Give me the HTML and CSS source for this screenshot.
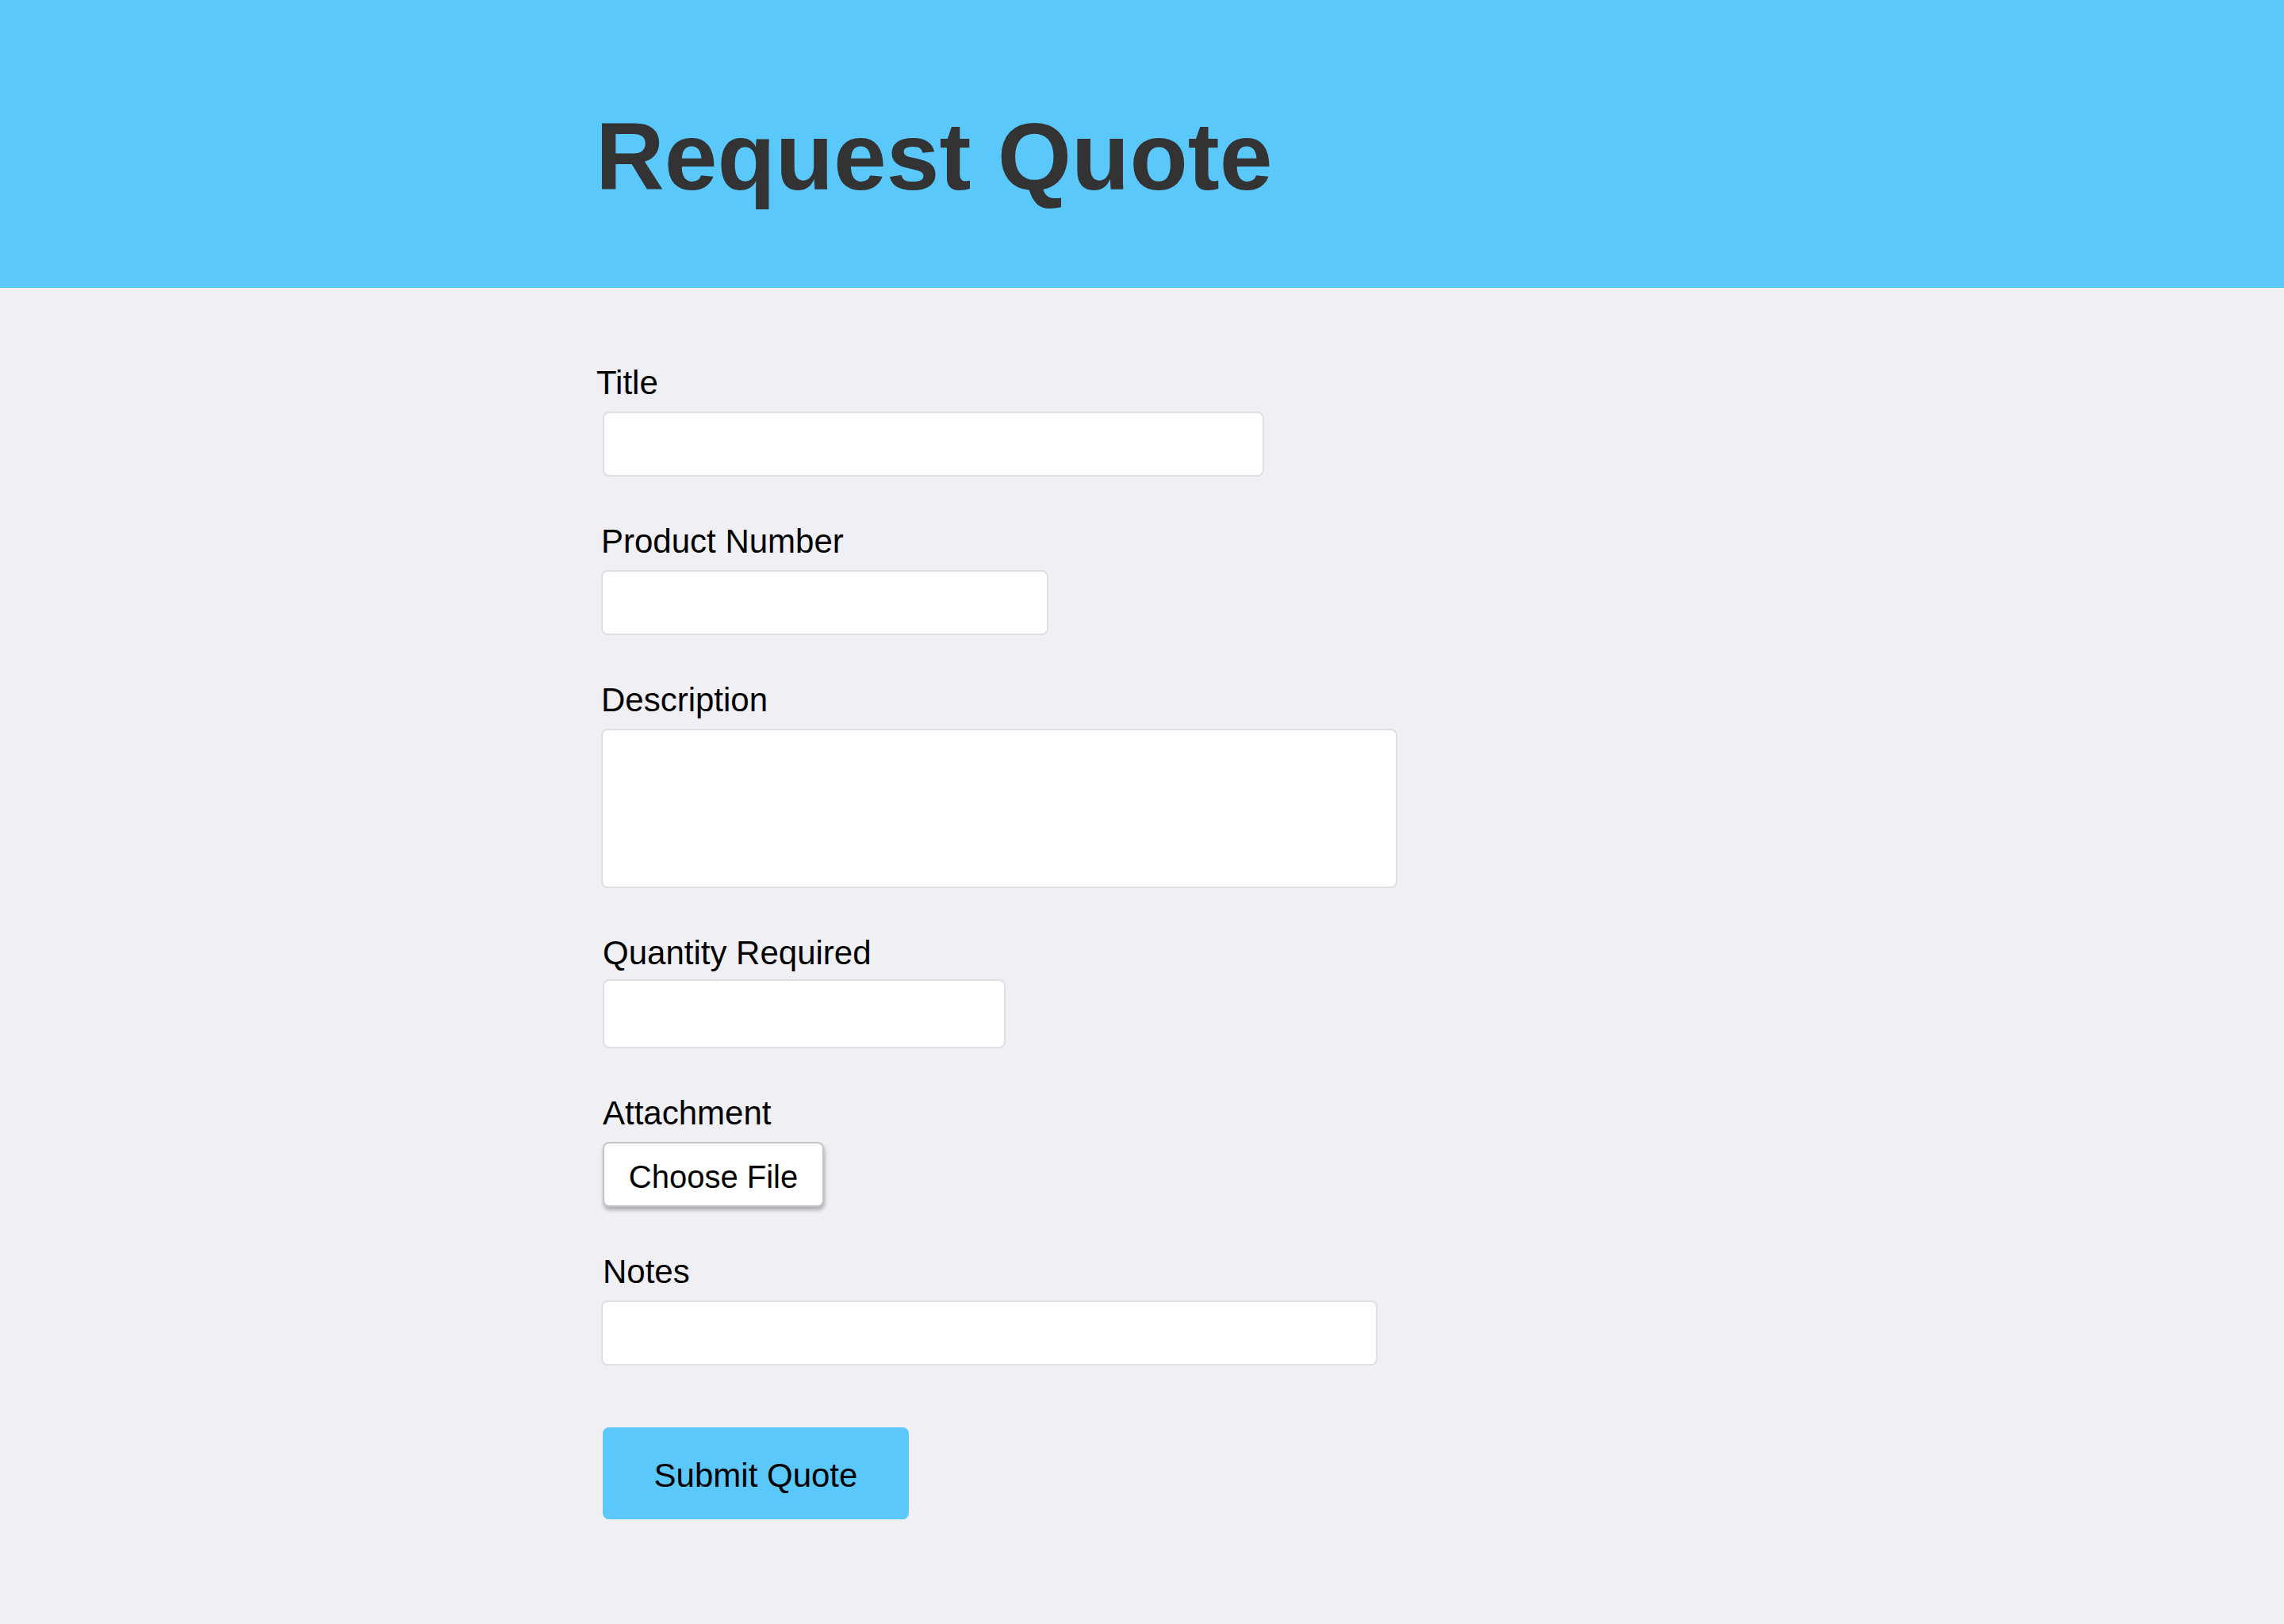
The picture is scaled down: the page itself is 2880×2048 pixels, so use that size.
FILE: index.html
```html
<!DOCTYPE html>
<html lang="en">
<head>
<meta charset="utf-8">
<title>Request Quote</title>
<link rel="stylesheet" href="styles.css">
</head>
<body>
  <header class="masthead">
    <div class="container">
      <h1 class="page-title">Request Quote</h1>
    </div>
  </header>
  <main class="container">
    <form class="quote-form" onsubmit="return false;">
      <div class="field">
        <label class="field-label flush" for="title">Title</label>
        <input class="text-input w-title shift" id="title" type="text">
      </div>
      <div class="field">
        <label class="field-label" for="product">Product Number</label>
        <input class="text-input w-product" id="product" type="text">
      </div>
      <div class="field">
        <label class="field-label" for="description">Description</label>
        <textarea class="text-input w-description" id="description"></textarea>
      </div>
      <div class="field">
        <label class="field-label shift" for="quantity">Quantity Required</label>
        <input class="text-input w-quantity shift qty" id="quantity" type="text">
      </div>
      <div class="field">
        <label class="field-label shift" for="attachment">Attachment</label>
        <button class="file-button shift" id="attachment" type="button">Choose File</button>
      </div>
      <div class="field last">
        <label class="field-label shift" for="notes">Notes</label>
        <input class="text-input w-notes" id="notes" type="text">
      </div>
      <button class="submit-button" type="submit">Submit Quote</button>
    </form>
  </main>
</body>
</html>
```

FILE: styles.css
```css
* {
  box-sizing: border-box;
}

html, body {
  margin: 0;
  padding: 0;
}

body {
  background: #efeff4;
  font-family: "Liberation Sans", Arial, sans-serif;
  color: #000;
  min-height: 2048px;
}

.container {
  width: 1378px;
  margin: 0 auto;
}

.masthead {
  background: #5ac8fa;
  height: 363px;
  padding-top: 128px;
}

.page-title {
  margin: 0;
  font-size: 120px;
  line-height: 138px;
  font-weight: 700;
  color: #333333;
}

.quote-form {
  padding-top: 96px;
  padding-left: 7px;
  display: flex;
  flex-direction: column;
  align-items: flex-start;
}

.field {
  display: flex;
  flex-direction: column;
  align-items: flex-start;
  margin-bottom: 58px;
}

.field.last {
  margin-bottom: 78px;
}

.field-label {
  display: block;
  font-size: 42px;
  line-height: 48px;
  margin-bottom: 12px;
  color: #000;
}

.field-label.flush {
  margin-left: -6px;
}

.shift {
  margin-left: 2px;
}

.text-input {
  display: block;
  height: 82px;
  background: #ffffff;
  border: 2px solid #dedee3;
  border-radius: 8px;
  font-family: inherit;
  font-size: 40px;
  padding: 0 16px;
  outline: none;
  margin: 0;
  resize: none;
}

.text-input.shift {
  margin-left: 2px;
}

.text-input.qty {
  height: 87px;
  margin-top: -3px;
}

.w-title { width: 834px; }
.w-product { width: 564px; }
.w-description { width: 1004px; height: 201px; }
.w-quantity { width: 508px; }
.w-notes { width: 979px; }

.file-button {
  height: 82px;
  width: 279px;
  padding: 6px 0 0;
  background: #ffffff;
  border: 2px solid #c4c4c6;
  border-radius: 8px;
  box-shadow: 1px 4px 5px rgba(0, 0, 0, 0.28);
  font-family: inherit;
  font-size: 40px;
  color: #000;
  cursor: pointer;
}

.submit-button {
  width: 386px;
  height: 116px;
  margin-left: 2px;
  background: #5ac8fa;
  border: none;
  border-radius: 8px;
  font-family: inherit;
  font-size: 42px;
  color: #000;
  cursor: pointer;
  padding: 6px 0 0;
}
```
